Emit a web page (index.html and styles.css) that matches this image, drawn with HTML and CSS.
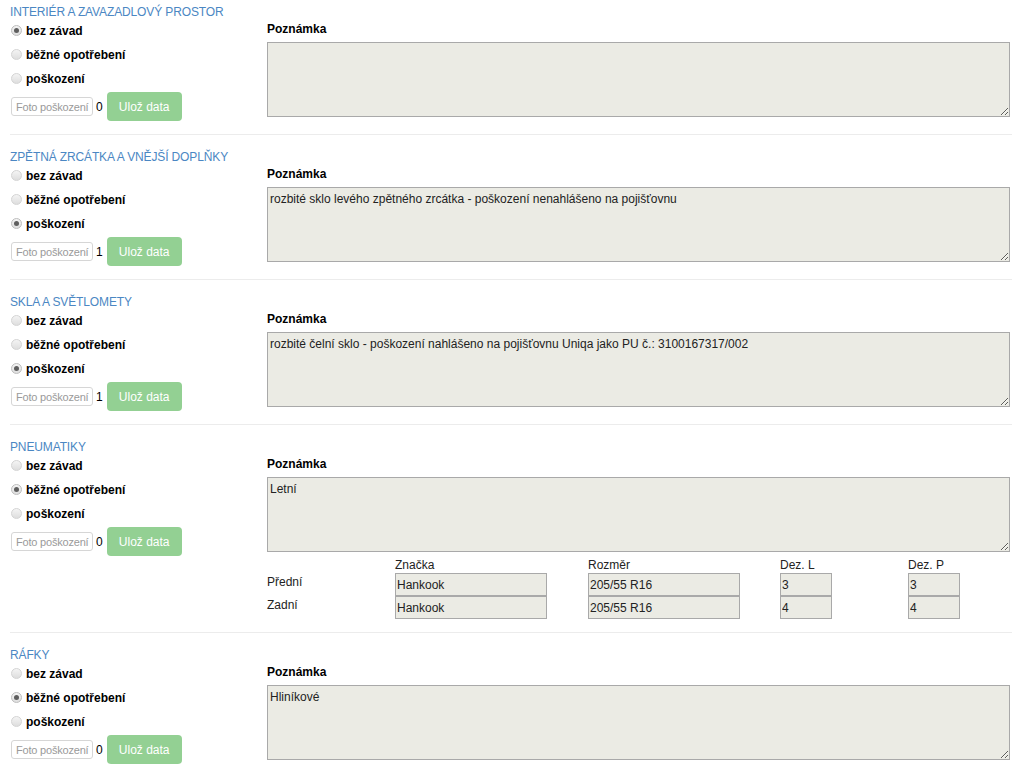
FILE: index.html
```html
<!DOCTYPE html>
<html lang="cs">
<head>
<meta charset="utf-8">
<title>Stav vozidla</title>
<link rel="stylesheet" href="styles.css">
</head>
<body>
<div class="page">

  <section class="sec">
    <div class="left">
      <div class="title">Interiér a zavazadlový prostor</div>
      <label class="opt"><span class="radio checked"></span>bez závad</label>
      <label class="opt"><span class="radio"></span>běžné opotřebení</label>
      <label class="opt"><span class="radio"></span>poškození</label>
      <div class="actions">
        <input class="foto" type="text" placeholder="Foto poškození">
        <span class="count">0</span>
        <button class="save" type="button">Ulož data</button>
      </div>
    </div>
    <div class="right">
      <div class="note-label">Poznámka</div>
      <textarea class="note" readonly></textarea>
    </div>
  </section>

  <section class="sec">
    <div class="left">
      <div class="title">Zpětná zrcátka a vnější doplňky</div>
      <label class="opt"><span class="radio"></span>bez závad</label>
      <label class="opt"><span class="radio"></span>běžné opotřebení</label>
      <label class="opt"><span class="radio checked"></span>poškození</label>
      <div class="actions">
        <input class="foto" type="text" placeholder="Foto poškození">
        <span class="count">1</span>
        <button class="save" type="button">Ulož data</button>
      </div>
    </div>
    <div class="right">
      <div class="note-label">Poznámka</div>
      <textarea class="note" readonly>rozbité sklo levého zpětného zrcátka - poškození nenahlášeno na pojišťovnu</textarea>
    </div>
  </section>

  <section class="sec">
    <div class="left">
      <div class="title">Skla a světlomety</div>
      <label class="opt"><span class="radio"></span>bez závad</label>
      <label class="opt"><span class="radio"></span>běžné opotřebení</label>
      <label class="opt"><span class="radio checked"></span>poškození</label>
      <div class="actions">
        <input class="foto" type="text" placeholder="Foto poškození">
        <span class="count">1</span>
        <button class="save" type="button">Ulož data</button>
      </div>
    </div>
    <div class="right">
      <div class="note-label">Poznámka</div>
      <textarea class="note" readonly>rozbité čelní sklo - poškození nahlášeno na pojišťovnu Uniqa jako PU č.: 3100167317/002</textarea>
    </div>
  </section>

  <section class="sec">
    <div class="left">
      <div class="title">Pneumatiky</div>
      <label class="opt"><span class="radio"></span>bez závad</label>
      <label class="opt"><span class="radio checked"></span>běžné opotřebení</label>
      <label class="opt"><span class="radio"></span>poškození</label>
      <div class="actions">
        <input class="foto" type="text" placeholder="Foto poškození">
        <span class="count">0</span>
        <button class="save" type="button">Ulož data</button>
      </div>
    </div>
    <div class="right">
      <div class="note-label">Poznámka</div>
      <textarea class="note" readonly>Letní</textarea>
      <div class="tires">
        <div class="th"></div>
        <div class="th">Značka</div>
        <div class="th">Rozměr</div>
        <div class="th">Dez. L</div>
        <div class="th">Dez. P</div>

        <div class="tl">Přední</div>
        <div><input class="tin wide" type="text" value="Hankook" readonly></div>
        <div><input class="tin wide" type="text" value="205/55 R16" readonly></div>
        <div><input class="tin narrow" type="text" value="3" readonly></div>
        <div><input class="tin narrow" type="text" value="3" readonly></div>

        <div class="tl">Zadní</div>
        <div><input class="tin wide" type="text" value="Hankook" readonly></div>
        <div><input class="tin wide" type="text" value="205/55 R16" readonly></div>
        <div><input class="tin narrow" type="text" value="4" readonly></div>
        <div><input class="tin narrow" type="text" value="4" readonly></div>
      </div>
    </div>
  </section>

  <section class="sec">
    <div class="left">
      <div class="title">Ráfky</div>
      <label class="opt"><span class="radio"></span>bez závad</label>
      <label class="opt"><span class="radio checked"></span>běžné opotřebení</label>
      <label class="opt"><span class="radio"></span>poškození</label>
      <div class="actions">
        <input class="foto" type="text" placeholder="Foto poškození">
        <span class="count">0</span>
        <button class="save" type="button">Ulož data</button>
      </div>
    </div>
    <div class="right">
      <div class="note-label">Poznámka</div>
      <textarea class="note" readonly>Hliníkové</textarea>
    </div>
  </section>

</div>
</body>
</html>
```

FILE: styles.css
```css
html, body {
  margin: 0;
  padding: 0;
  background: #fff;
}

body {
  font-family: "Liberation Sans", Arial, sans-serif;
  font-size: 12px;
  color: #111;
}

.page {
  padding: 5px 12px 0 10px;
}

.sec {
  display: grid;
  grid-template-columns: 257px 1fr;
  padding-bottom: 13px;
  border-bottom: 1px solid #ececec;
  margin-bottom: 15px;
}

.left {
  display: flex;
  flex-direction: column;
}

.title {
  font-size: 12px;
  line-height: 14px;
  height: 14px;
  margin-bottom: 1px;
  color: #4b87c3;
  text-transform: uppercase;
  letter-spacing: -0.13px;
  white-space: nowrap;
}

.opt {
  display: flex;
  align-items: flex-start;
  height: 23px;
  line-height: 23px;
  font-weight: bold;
  font-size: 12px;
  color: #000;
}

.opt + .opt {
  margin-top: 1px;
}

.radio {
  box-sizing: border-box;
  width: 11px;
  height: 11px;
  margin: 5px 4px 0 1px;
  border-radius: 50%;
  border: 1px solid #d4d4d4;
  background: linear-gradient(#f4f4f4, #dedede);
  display: flex;
  align-items: center;
  justify-content: center;
}

.radio.checked {
  border-color: #bdbdbd;
}

.radio.checked::after {
  content: "";
  width: 5px;
  height: 5px;
  border-radius: 50%;
  background: #5e5e5e;
}

.actions {
  display: flex;
  align-items: center;
  margin-top: 1px;
  height: 29px;
}

.foto {
  box-sizing: border-box;
  width: 82px;
  height: 19px;
  margin: 0 0 0 1px;
  padding: 0 3px 0 4px;
  border: 1px solid #d6d6d6;
  border-radius: 3px;
  font-family: "Liberation Sans", Arial, sans-serif;
  font-size: 11px;
  letter-spacing: -0.2px;
  color: #999;
  background: #fff;
  outline: none;
}

.foto::placeholder {
  color: #9a9a9a;
}

.count {
  margin: 0 4px 0 3px;
  font-size: 12px;
  color: #000;
}

.save {
  box-sizing: border-box;
  width: 75px;
  height: 29px;
  padding: 0;
  border: none;
  border-radius: 4px;
  background: #93d093;
  color: #fff;
  font-family: "Liberation Sans", Arial, sans-serif;
  font-size: 12px;
}

.right {
  padding-top: 16px;
  padding-right: 2px;
}

.note-label {
  font-weight: bold;
  font-size: 12px;
  line-height: 17px;
  color: #000;
}

.note {
  display: block;
  box-sizing: border-box;
  width: 100%;
  height: 75px;
  margin: 4px 0 0 0;
  padding: 4px 2px;
  border: 1px solid #a9a9a9;
  background: #ebebe4;
  font-family: "Liberation Sans", Arial, sans-serif;
  font-size: 12px;
  line-height: 14px;
  color: #222;
  outline: none;
}

.tires {
  display: grid;
  grid-template-columns: 128px 193px 192px 128px 1fr;
  margin-top: 5px;
}

.th {
  font-size: 12px;
  line-height: 16px;
  color: #222;
}

.tl {
  font-size: 12px;
  line-height: 19px;
  color: #222;
}

.tin {
  display: block;
  box-sizing: border-box;
  height: 23px;
  margin: 0;
  padding: 0 1px;
  border: 1px solid #a9a9a9;
  background: #ebebe4;
  font-family: "Liberation Sans", Arial, sans-serif;
  font-size: 12px;
  color: #222;
  outline: none;
}

.tin.wide {
  width: 152px;
}

.tin.narrow {
  width: 52px;
}
```
